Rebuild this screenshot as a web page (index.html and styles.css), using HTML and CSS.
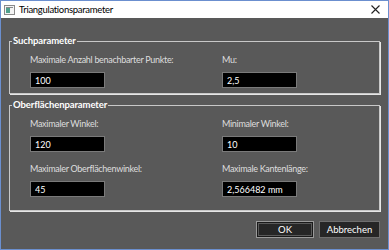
FILE: index.html
```html
<!DOCTYPE html>
<html lang="de">
<head>
<meta charset="UTF-8" />
<title>Triangulationsparameter</title>
<link rel="stylesheet" href="styles.css">
</head>
<body>

<div class="window">
  <div class="titlebar">
    <svg class="app-icon" width="11" height="10" viewBox="0 0 11 10">
      <rect x="0.5" y="0.5" width="10" height="9" fill="#f4f4f4" stroke="#8a8a8a"/>
      <rect x="2" y="3" width="4" height="5" fill="#4fa08c"/>
      <rect x="2" y="2" width="7" height="1" fill="#8a8a8a"/>
    </svg>
    <span class="title">Triangulationsparameter</span>
    <svg class="close" width="9" height="9" viewBox="0 0 9 9">
      <path d="M0.5 0.5 L8.5 8.5 M8.5 0.5 L0.5 8.5" stroke="#222" stroke-width="1.1"/>
    </svg>
  </div>

  <div class="content">
    <fieldset class="group">
      <legend>Suchparameter</legend>
      <div class="fields">
        <div class="field">
          <label>Maximale Anzahl benachbarter Punkte:</label>
          <input type="text" value="100">
        </div>
        <div class="field">
          <label>Mu:</label>
          <input type="text" value="2,5">
        </div>
      </div>
    </fieldset>

    <fieldset class="group second">
      <legend>Oberflächenparameter</legend>
      <div class="fields">
        <div class="field">
          <label>Maximaler Winkel:</label>
          <input type="text" value="120">
        </div>
        <div class="field">
          <label>Minimaler Winkel:</label>
          <input type="text" value="10">
        </div>
        <div class="field">
          <label>Maximaler Oberflächenwinkel:</label>
          <input type="text" value="45">
        </div>
        <div class="field">
          <label>Maximale Kantenlänge:</label>
          <input type="text" value="2,566482 mm">
        </div>
      </div>
    </fieldset>

    <div class="buttons">
      <button class="default">OK</button>
      <button>Abbrechen</button>
    </div>
  </div>
</div>

</body>
</html>
```

FILE: styles.css
```css
body {
  margin: 0;
  font-family: Lato, "Noto Sans", sans-serif;
  font-size: 9px;
}
.window {
  width: 389px;
  height: 250px;
  box-sizing: border-box;
  border: 1px solid #6b8fcf;
  background: #595959;
  display: flex;
  flex-direction: column;
}
.titlebar {
  height: 17px;
  background: #fff;
  display: flex;
  align-items: center;
  padding: 0 8px 0 3px;
  flex-shrink: 0;
}
.app-icon {
  margin-right: 4px;
}
.title {
  color: #000;
  font-size: 9.5px;
  letter-spacing: -0.3px;
  flex: 1;
}
.content {
  padding: 16px 8px 0 8px;
}
.group {
  margin: 0;
  padding: 0;
  border: 1px solid #c8c8c8;
  box-shadow: 1px 1px 0 #e6e6e6;
}
.group legend {
  color: #fff;
  font-weight: bold;
  font-size: 9.5px;
  letter-spacing: -0.1px;
  line-height: 14px;
  padding: 0 1px;
  margin-left: 2px;
}
.group.second {
  margin-top: 4px;
}
.fields {
  display: grid;
  grid-template-columns: 192px 1fr;
  row-gap: 10px;
  padding: 5px 0 5px 20px;
}
.second .fields {
  padding-bottom: 13px;
}
.field {
  display: flex;
  flex-direction: column;
  align-items: flex-start;
}
.field label {
  color: #dedede;
  line-height: 14px;
  letter-spacing: -0.3px;
  margin-bottom: 5px;
}
.field input {
  width: 75px;
  height: 16px;
  box-sizing: border-box;
  background: #000;
  color: #fff;
  border: 1px solid #7a7a7a;
  font-family: inherit;
  font-size: 9px;
  padding: 0 4px;
  outline: none;
}
.buttons {
  display: flex;
  justify-content: flex-end;
  gap: 5px;
  margin-top: 10px;
}
.buttons button {
  width: 61px;
  height: 17px;
  background: #262626;
  color: #fff;
  border: 1px solid #6e6e6e;
  font-family: inherit;
  font-size: 9.5px;
  padding: 0;
}
.buttons button.default {
  width: 58px;
  border-color: #9a9a9a;
  box-shadow: inset 0 0 0 1px #1a1a1a, inset 0 0 0 2px #5a5a5a;
}
```
